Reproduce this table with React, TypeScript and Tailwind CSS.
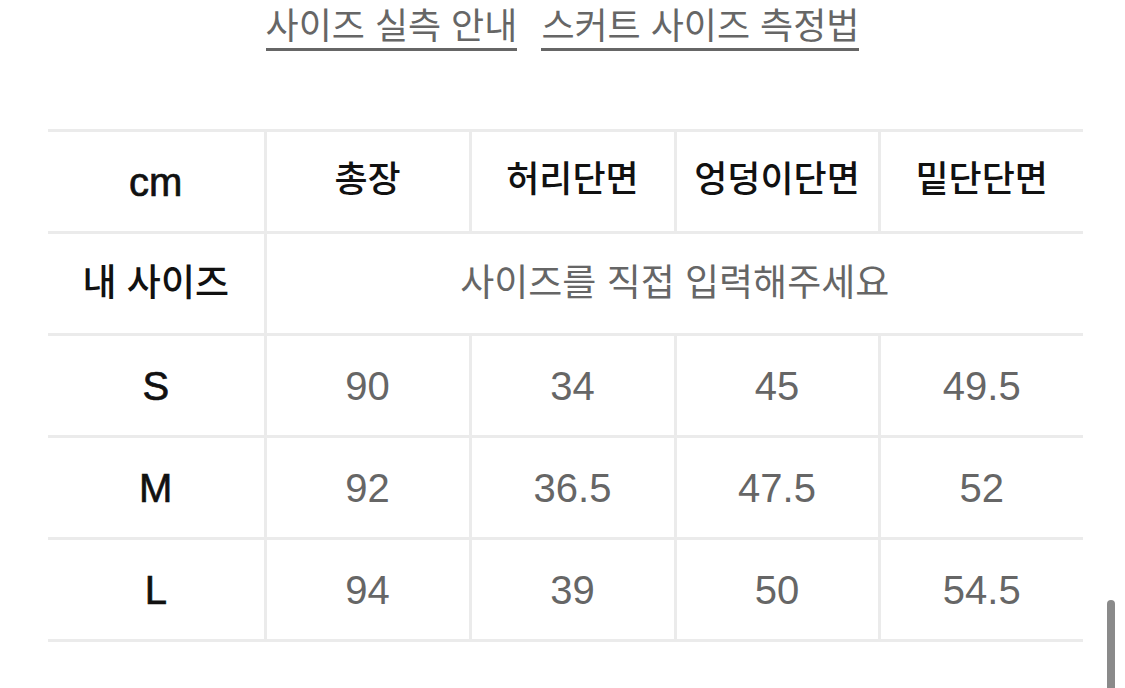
const HEADERS = ["총장", "허리단면", "엉덩이단면", "밑단단면"];

const ROWS = [
  { size: "S", values: ["90", "34", "45", "49.5"] },
  { size: "M", values: ["92", "36.5", "47.5", "52"] },
  { size: "L", values: ["94", "39", "50", "54.5"] },
];

const font = "font-['Liberation_Sans','Noto_Sans_CJK_KR',sans-serif]";

export default function App() {
  return (
    <div className={`relative h-[688px] w-[1125px] overflow-hidden bg-white ${font}`}>
      {/* Guide links */}
      <div className="flex justify-center gap-[24px] pt-[5px]">
        <a className="border-b-[3px] border-[#666] text-[36px] leading-[43px] text-[#666]">
          사이즈 실측 안내
        </a>
        <a className="border-b-[3px] border-[#666] text-[36px] leading-[43px] text-[#666]">
          스커트 사이즈 측정법
        </a>
      </div>

      {/* Size table */}
      <table className="ml-[48px] mt-[78px] w-[1035px] table-fixed border-collapse">
        <colgroup>
          <col className="w-[217px]" />
          <col className="w-[205px]" />
          <col className="w-[205px]" />
          <col className="w-[204px]" />
          <col className="w-[204px]" />
        </colgroup>
        <tbody>
          <tr className="h-[102px] border-y-[3px] border-[#ebebeb]">
            <td className="text-center text-[40px] text-[#111] [-webkit-text-stroke:0.7px_#111]">cm</td>
            {HEADERS.map((h) => (
              <td
                key={h}
                className="border-l-[3px] border-[#ebebeb] pb-[4px] text-center text-[36px] font-medium text-[#111]"
              >
                {h}
              </td>
            ))}
          </tr>
          <tr className="h-[102px] border-b-[3px] border-[#ebebeb]">
            <td className="text-center text-[37px] font-medium text-[#111]">내 사이즈</td>
            <td
              colSpan={4}
              className="border-l-[3px] border-[#ebebeb] text-center text-[37px] text-[#666]"
            >
              사이즈를 직접 입력해주세요
            </td>
          </tr>
          {ROWS.map((r) => (
            <tr key={r.size} className="h-[102px] border-b-[3px] border-[#ebebeb]">
              <td className="text-center text-[40px] text-[#111] [-webkit-text-stroke:0.7px_#111]">{r.size}</td>
              {r.values.map((v, i) => (
                <td
                  key={i}
                  className="border-l-[3px] border-[#ebebeb] text-center text-[40px] text-[#666]"
                >
                  {v}
                </td>
              ))}
            </tr>
          ))}
        </tbody>
      </table>

      {/* Scroll indicator */}
      <div className="absolute left-[1107px] top-[600px] h-[100px] w-[8px] rounded-full bg-[#8a8a8a]" />
    </div>
  );
}
